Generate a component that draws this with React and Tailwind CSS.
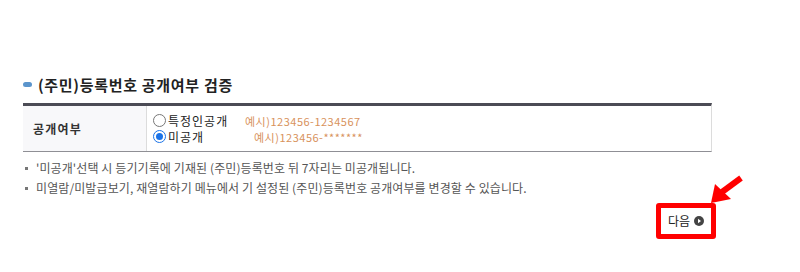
export default function App() {
  const notes = [
    "'미공개'선택 시 등기기록에 기재된 (주민)등록번호 뒤 7자리는 미공개됩니다.",
    "미열람/미발급보기, 재열람하기 메뉴에서 기 설정된 (주민)등록번호 공개여부를 변경할 수 있습니다.",
  ];

  return (
    <div className="relative w-[800px] h-[272px] bg-white font-['Noto_Sans_CJK_KR',sans-serif] text-[#333]">
      <div className="pl-[23px] pt-[73px] w-[712px]">
        {/* title */}
        <div className="flex items-center gap-[6px] h-[22px]">
          <span className="w-[9px] h-[5px] rounded-full bg-[#5b95cc]" />
          <h2 className="text-[15px] leading-none font-bold tracking-[0.7px] text-[#222]">
            (주민)등록번호 공개여부 검증
          </h2>
        </div>

        {/* table */}
        <div className="mt-[8px] grid grid-cols-[124px_1fr] border-t-[3px] border-[#4b4b55] border-b border-b-[#8f8f95] border-r border-r-[#dcdcdc] h-[49px]">
          <div className="flex items-center pl-[10px] bg-[#f8f8fa] border-r border-[#dcdcdc] text-[12px] font-bold tracking-[1.2px] text-[#333]">
            공개여부
          </div>
          <div className="flex flex-col justify-center pl-[6px] text-[12px] leading-[16px]">
            <div className="flex items-center">
              <span className="w-[13px] h-[13px] rounded-full border border-[#777] bg-white" />
              <span className="ml-[2px] w-[77px] tracking-[1px] text-[#222]">특정인공개</span>
              <span className="text-[11px] tracking-[0.5px] text-[#d8925c]">예시)123456-1234567</span>
            </div>
            <div className="flex items-center">
              <span className="w-[13px] h-[13px] rounded-full border border-[#1a73e8] bg-white flex items-center justify-center">
                <span className="w-[7px] h-[7px] rounded-full bg-[#1a73e8]" />
              </span>
              <span className="ml-[2px] w-[86px] tracking-[1px] text-[#222]">미공개</span>
              <span className="text-[11px] tracking-[0.5px] text-[#d8925c]">예시)123456-*******</span>
            </div>
          </div>
        </div>

        {/* notes */}
        <ul className="mt-[8px] space-y-[4px] text-[12px] leading-[16px] tracking-[0.1px] text-[#555]">
          {notes.map((note) => (
            <li key={note} className="flex items-center">
              <span className="ml-[2px] w-[3px] h-[3px] bg-[#777]" />
              <span className="ml-[8px]">{note}</span>
            </li>
          ))}
        </ul>

        {/* next button */}
        <div className="mt-[7px] flex justify-end -mr-[4px]">
          <div className="flex items-center gap-[4px] h-[36px] px-[7px] border-[5px] border-[#ff0000] rounded-[3px]">
            <span className="text-[12px] text-[#222]">다음</span>
            <svg width="10" height="10" viewBox="0 0 10 10">
              <circle cx="5" cy="5" r="5" fill="#444" />
              <path d="M4 2.8 L7 5 L4 7.2 Z" fill="#fff" />
            </svg>
          </div>
        </div>
      </div>

      {/* red arrow */}
      <svg className="absolute left-[700px] top-[170px]" width="50" height="45" viewBox="0 0 50 45">
        <line x1="22" y1="22" x2="41" y2="8" stroke="#ff0000" strokeWidth="6" />
        <polygon points="11,33 15,14 31,29" fill="#ff0000" />
      </svg>
    </div>
  );
}
